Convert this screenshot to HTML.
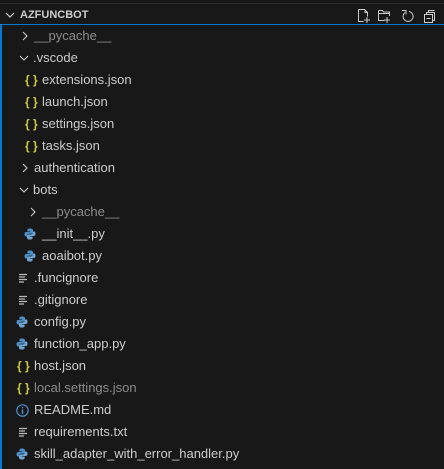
<!DOCTYPE html><html><head><style>
body{margin:0;width:444px;height:469px;background:#181818;overflow:hidden;font-family:"Liberation Sans",sans-serif;position:relative}
.top{position:absolute;left:0;top:3px;width:444px;height:1px;background:#2b2b2b}
.hdr{position:absolute;left:0;top:4px;width:444px;height:21px;color:#ccc;font-weight:bold;font-size:11px}
.hdr span{position:absolute;left:20px;top:5px}
.bl{position:absolute;left:0;top:24px;width:444px;height:1px;background:#0078d4}
.lb{position:absolute;left:0;top:25px;width:2px;height:444px;background:#0078d4}
.r{position:absolute;height:22px;line-height:22px;font-size:13px;color:#ccc;white-space:nowrap}
.g{color:#8c8c8c}
.ic{position:absolute;top:0;height:22px}
.ic svg{position:absolute;left:0}
.br{position:absolute;left:0;color:#cbcb41;font-weight:bold;font-size:12px;letter-spacing:0px}
</style></head><body>
<div class="top"></div>
<div class="hdr"><svg style="position:absolute;left:5px;top:6px" width="10" height="10"><path d="M1 3l4 4 4-4" stroke="#ccc" fill="none" stroke-width="1.2"/></svg><span>AZFUNCBOT</span>
<svg style="position:absolute;left:356px;top:4px" width="80" height="16" fill="none" stroke="#ccc" stroke-width="1">
<path d="M2.5 1.5h6l3 3v4M2.5 1.5v12h5M9 1.5v3h3M11 9v6M8 12h6"/>
<path d="M22.5 2.5h4l1 1.5h6v4M22.5 2.5v10h6M22.5 5.5h11M31 9v6M28 12h6"/>
<path d="M53 3.5a5 5 0 1 1-4 1M46 2.5h4v4" />
<path d="M68.5 6.5v8h8v-8zM70.5 6.5v-2h8v8h-2M72.5 4.5v-2h6M70.5 10.5h4"/>
</svg></div>
<div class="bl"></div><div class="lb"></div>
<div id="t"></div>
<script>
var C='<svg width="10" height="10" style="top:6px"><path d="M3 1l4 4-4 4" stroke="#ccc" fill="none" stroke-width="1.1"/></svg>';
var O='<svg width="10" height="10" style="top:6px"><path d="M1 3l4 4 4-4" stroke="#ccc" fill="none" stroke-width="1.1"/></svg>';
var B='<span class="br">{ }</span>';
var P='<svg width="12" height="12" style="top:5px"><path d="M6 .5c-2.5 0-2.6 1-2.6 1.8V3.5h2.8V4H2.3C1 4 .5 5 .5 6.3S1 8.5 2.3 8.5h.9V7.3c0-.9.8-1.7 1.7-1.7h2.5c.8 0 1.6-.6 1.6-1.4V2.3C9 1.5 8.4.5 6 .5z" fill="#4d8fc9"/><path d="M6 11.5c2.5 0 2.6-1 2.6-1.8V8.5H5.8V8h3.9C11 8 11.5 7 11.5 5.7S11 3.5 9.7 3.5h-.9v1.2c0 .9-.8 1.7-1.7 1.7H4.6C3.8 6.4 3 7 3 7.8v1.9c0 .8.6 1.8 3 1.8z" fill="#6fa6d4"/></svg>';
var L='<svg width="10" height="10" style="top:6px"><path d="M1 1.5h8M1 4h6M1 6.5h8M1 9h5" stroke="#bbb" stroke-width="1.2"/></svg>';
var I='<svg width="13" height="13" style="top:5px"><circle cx="6.5" cy="6.5" r="5.7" fill="none" stroke="#4d8fc9" stroke-width="1.2"/><path d="M6.5 5.5v4.5M6.5 3v1.4" stroke="#4d8fc9" stroke-width="1.4"/></svg>';
// [icon, iconLeft, text, gray, textLeft]
var rows=[
[C,20,'__pycache__',1,34],[O,19,'.vscode',0,33],[B,25,'extensions.json',0,42],[B,25,'launch.json',0,42],[B,25,'settings.json',0,42],[B,25,'tasks.json',0,42],
[C,20,'authentication',0,34],[O,19,'bots',0,33],[C,28,'__pycache__',1,42],[P,24,'__init__.py',0,42],[P,24,'aoaibot.py',0,42],
[L,18,'.funcignore',0,34],[L,18,'.gitignore',0,34],[P,16,'config.py',0,34],[P,16,'function_app.py',0,34],[B,17,'host.json',0,34],[B,17,'local.settings.json',1,34],
[I,16,'README.md',0,34],[L,18,'requirements.txt',0,34],[P,16,'skill_adapter_with_error_handler.py',0,34]];
var h='';rows.forEach(function(r,i){
h+='<div class="r'+(r[3]?' g':'')+'" style="top:'+(25+22*i)+'px;left:0;width:444px"><div class="ic" style="left:'+r[1]+'px">'+r[0]+'</div><span style="position:absolute;left:'+r[4]+'px">'+r[2]+'</span></div>';});
document.getElementById('t').innerHTML=h;
</script>
</body></html>
